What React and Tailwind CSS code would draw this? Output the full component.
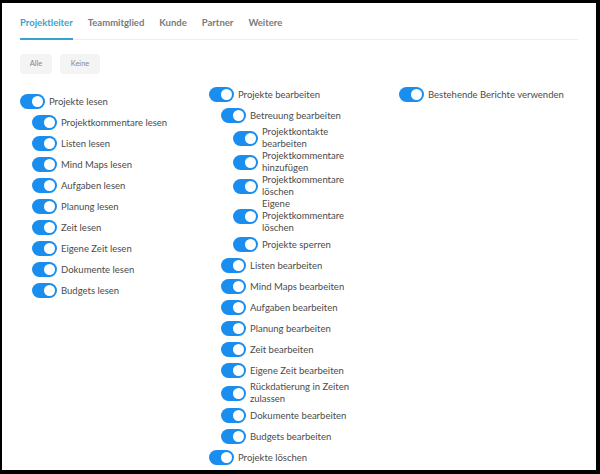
import React from "react";

const tabs = ["Projektleiter", "Teammitglied", "Kunde", "Partner", "Weitere"];

const indent = {
  0: "pl-0",
  1: "pl-[12px]",
  2: "pl-[24px]",
};

const col1 = [
  { lines: ["Projekte lesen"], level: 0 },
  { lines: ["Projektkommentare lesen"], level: 1 },
  { lines: ["Listen lesen"], level: 1 },
  { lines: ["Mind Maps lesen"], level: 1 },
  { lines: ["Aufgaben lesen"], level: 1 },
  { lines: ["Planung lesen"], level: 1 },
  { lines: ["Zeit lesen"], level: 1 },
  { lines: ["Eigene Zeit lesen"], level: 1 },
  { lines: ["Dokumente lesen"], level: 1 },
  { lines: ["Budgets lesen"], level: 1 },
];

const col2 = [
  { lines: ["Projekte bearbeiten"], level: 0 },
  { lines: ["Betreuung bearbeiten"], level: 1 },
  { lines: ["Projektkontakte", "bearbeiten"], level: 2 },
  { lines: ["Projektkommentare", "hinzufügen"], level: 2 },
  { lines: ["Projektkommentare", "löschen"], level: 2 },
  { lines: ["Eigene", "Projektkommentare", "löschen"], level: 2 },
  { lines: ["Projekte sperren"], level: 2 },
  { lines: ["Listen bearbeiten"], level: 1 },
  { lines: ["Mind Maps bearbeiten"], level: 1 },
  { lines: ["Aufgaben bearbeiten"], level: 1 },
  { lines: ["Planung bearbeiten"], level: 1 },
  { lines: ["Zeit bearbeiten"], level: 1 },
  { lines: ["Eigene Zeit bearbeiten"], level: 1 },
  { lines: ["Rückdatierung in Zeiten", "zulassen"], level: 1 },
  { lines: ["Dokumente bearbeiten"], level: 1 },
  { lines: ["Budgets bearbeiten"], level: 1 },
  { lines: ["Projekte löschen"], level: 0 },
];

const col3 = [{ lines: ["Bestehende Berichte verwenden"], level: 0 }];

const Toggle = () => (
  <span className="flex h-[15px] w-[25px] shrink-0 items-center justify-end rounded-full bg-[#1a8eee] p-[2px]">
    <span className="h-[11px] w-[11px] rounded-full bg-white" />
  </span>
);

const Row = ({ item }) => (
  <div className={`flex min-h-[21px] items-center gap-[4px] ${indent[item.level]}`}>
    <Toggle />
    <div className="text-[9.5px] leading-[12px] text-[#4b4b4b]">
      {item.lines.map((l, i) => (
        <div key={i}>{l}</div>
      ))}
    </div>
  </div>
);

export default function App() {
  return (
    <div
      className="h-[474px] w-[600px] bg-black pb-[4px] pl-[2px] pr-[4px] pt-[3px]"
      style={{ fontFamily: "Lato, 'Open Sans', sans-serif" }}
    >
      <div className="h-full bg-white px-[18px]">
        {/* tabs */}
        <div className="flex gap-[15px] border-b border-[#eeeeee] pt-[13px]">
          {tabs.map((t, i) => (
            <div
              key={t}
              className={`-mb-px pb-[8px] text-[9.5px] font-bold leading-[14px] ${
                i === 0
                  ? "border-b-2 border-[#3aa2cf] text-[#3aa2cf]"
                  : "border-b-2 border-transparent text-[#7a7a7a]"
              }`}
            >
              {t}
            </div>
          ))}
        </div>

        {/* Alle / Keine */}
        <div className="mt-[14px] flex gap-[8px]">
          <button className="h-[20px] w-[32px] rounded-[3px] bg-[#f4f4f4] text-[7.5px] text-[#888]">
            Alle
          </button>
          <button className="h-[20px] w-[40px] rounded-[3px] bg-[#f4f4f4] text-[7.5px] text-[#888]">
            Keine
          </button>
        </div>

        {/* permissions */}
        <div className="mt-[10px] grid grid-cols-[189px_190px_1fr]">
          <div className="pt-[7px]">
            {col1.map((it, i) => (
              <Row key={i} item={it} />
            ))}
          </div>
          <div>
            {col2.map((it, i) => (
              <Row key={i} item={it} />
            ))}
          </div>
          <div>
            {col3.map((it, i) => (
              <Row key={i} item={it} />
            ))}
          </div>
        </div>
      </div>
    </div>
  );
}
